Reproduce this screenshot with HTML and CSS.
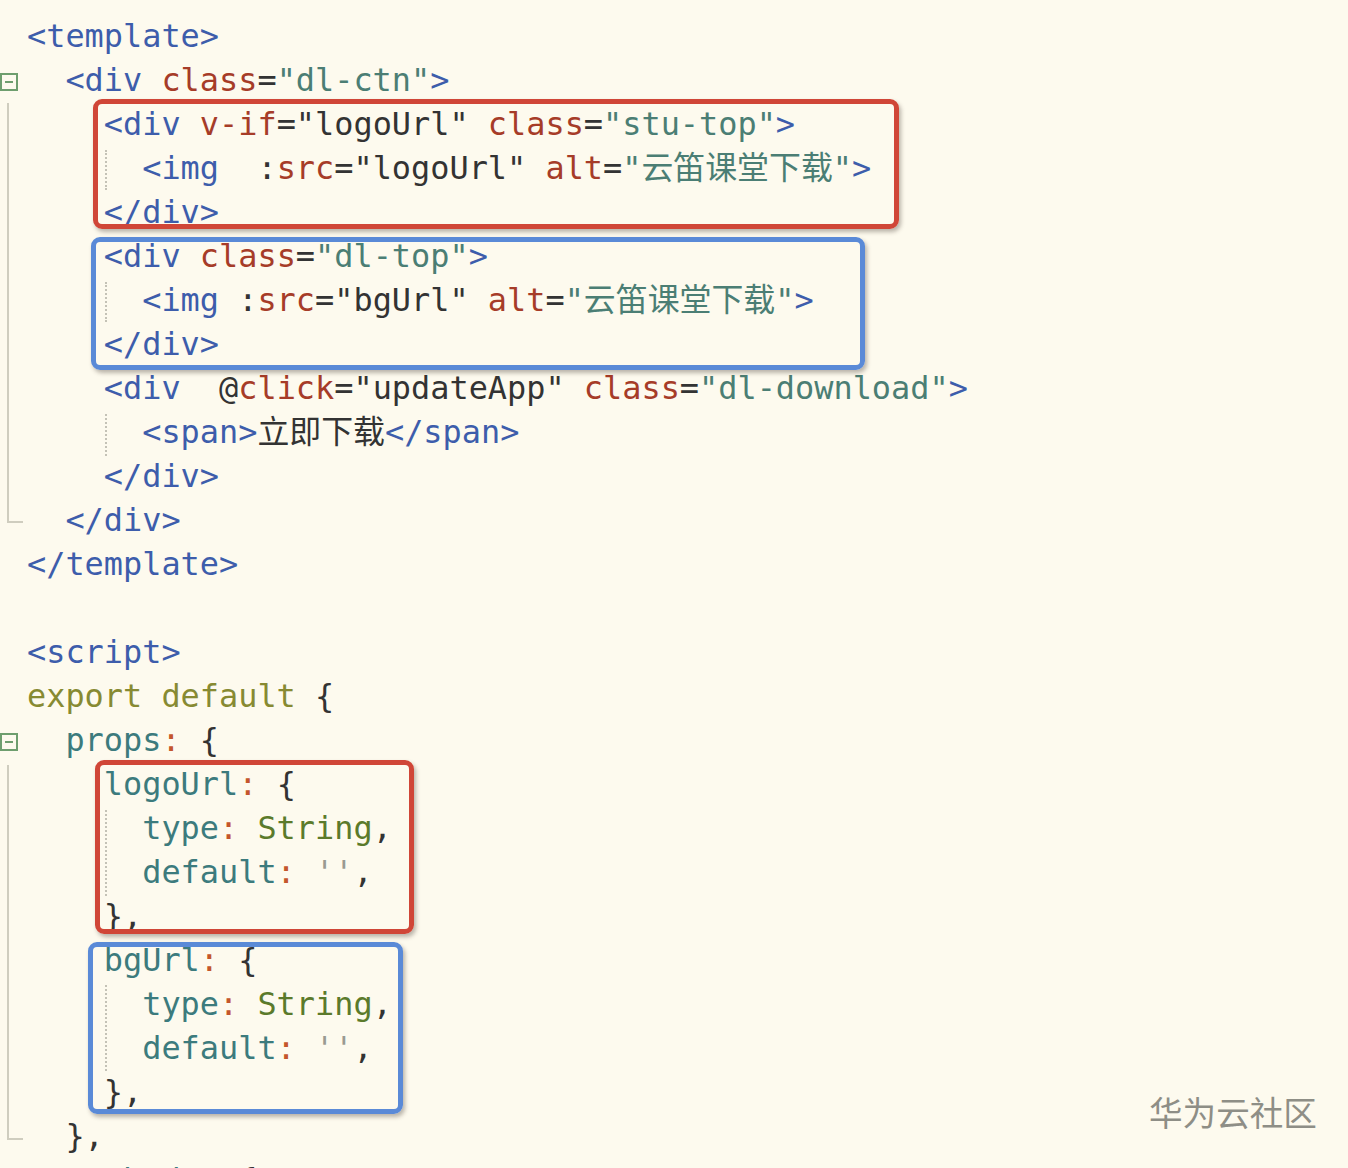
FILE: index.html
```html
<!DOCTYPE html>
<html lang="zh">
<head>
<meta charset="utf-8">
<title>code</title>
<link rel="stylesheet" href="styles.css">
</head>
<body>
<div class="editor">
  <div class="code">
<div class="ln"><span class="t">&lt;template&gt;</span></div>
<div class="ln">  <span class="t">&lt;div</span> <span class="a">class</span><span class="p">=</span><span class="v">"dl-ctn"</span><span class="t">&gt;</span></div>
<div class="ln">    <span class="t">&lt;div</span> <span class="a">v-if</span><span class="p">="logoUrl"</span> <span class="a">class</span><span class="p">=</span><span class="v">"stu-top"</span><span class="t">&gt;</span></div>
<div class="ln">      <span class="t">&lt;img</span>  <span class="p">:</span><span class="a">src</span><span class="p">="logoUrl"</span> <span class="a">alt</span><span class="p">=</span><span class="v">"云笛课堂下载"</span><span class="t">&gt;</span></div>
<div class="ln">    <span class="t">&lt;/div&gt;</span></div>
<div class="ln">    <span class="t">&lt;div</span> <span class="a">class</span><span class="p">=</span><span class="v">"dl-top"</span><span class="t">&gt;</span></div>
<div class="ln">      <span class="t">&lt;img</span> <span class="p">:</span><span class="a">src</span><span class="p">="bgUrl"</span> <span class="a">alt</span><span class="p">=</span><span class="v">"云笛课堂下载"</span><span class="t">&gt;</span></div>
<div class="ln">    <span class="t">&lt;/div&gt;</span></div>
<div class="ln">    <span class="t">&lt;div</span>  <span class="p">@</span><span class="a">click</span><span class="p">="updateApp"</span> <span class="a">class</span><span class="p">=</span><span class="v">"dl-download"</span><span class="t">&gt;</span></div>
<div class="ln">      <span class="t">&lt;span&gt;</span><span class="p">立即下载</span><span class="t">&lt;/span&gt;</span></div>
<div class="ln">    <span class="t">&lt;/div&gt;</span></div>
<div class="ln">  <span class="t">&lt;/div&gt;</span></div>
<div class="ln"><span class="t">&lt;/template&gt;</span></div>
<div class="ln"> </div>
<div class="ln"><span class="t">&lt;script&gt;</span></div>
<div class="ln"><span class="k">export</span> <span class="k">default</span> <span class="p">{</span></div>
<div class="ln">  <span class="n">props</span><span class="c">:</span> <span class="p">{</span></div>
<div class="ln">    <span class="n">logoUrl</span><span class="c">:</span> <span class="p">{</span></div>
<div class="ln">      <span class="n">type</span><span class="c">:</span> <span class="s">String</span><span class="p">,</span></div>
<div class="ln">      <span class="n">default</span><span class="c">:</span> <span class="q">''</span><span class="p">,</span></div>
<div class="ln">    <span class="p">},</span></div>
<div class="ln">    <span class="n">bgUrl</span><span class="c">:</span> <span class="p">{</span></div>
<div class="ln">      <span class="n">type</span><span class="c">:</span> <span class="s">String</span><span class="p">,</span></div>
<div class="ln">      <span class="n">default</span><span class="c">:</span> <span class="q">''</span><span class="p">,</span></div>
<div class="ln">    <span class="p">},</span></div>
<div class="ln">  <span class="p">},</span></div>
<div class="ln">  <span class="n">methods</span><span class="c">:</span> <span class="p">{</span></div>
  </div>

  <div class="fold fold-1"><span class="fold-minus"></span></div>
  <div class="fold fold-2"><span class="fold-minus"></span></div>
  <div class="foldline foldline-1"></div>
  <div class="foldline foldline-2"></div>

  <div class="guide guide-1"></div>
  <div class="guide guide-2"></div>
  <div class="guide guide-3"></div>
  <div class="guide guide-4"></div>
  <div class="guide guide-5"></div>

  <div class="box red box-1"></div>
  <div class="box blue box-2"></div>
  <div class="box red box-3"></div>
  <div class="box blue box-4"></div>

  <div class="watermark">华为云社区</div>
</div>
</body>
</html>
```

FILE: styles.css
```css
html, body {
  margin: 0;
  padding: 0;
  background: #fdfaee;
}
.editor {
  position: relative;
  width: 1348px;
  height: 1168px;
  overflow: hidden;
  background: #fdfaee;
}
.code {
  padding: 14px 0 0 27px;
  font-family: "DejaVu Sans Mono", "Noto Sans CJK SC", monospace;
  font-size: 31.9px;
  color: #333333;
}
.ln {
  height: 44px;
  line-height: 44px;
  white-space: pre;
}
.t { color: #3d5dab; }
.a { color: #a63c28; }
.v { color: #4b7e74; }
.p { color: #333333; }
.k { color: #878a32; }
.n { color: #3c7b7d; }
.c { color: #c4562c; }
.s { color: #5b7a2b; }
.q { color: #9a9a92; }

.fold {
  position: absolute;
  left: 0;
  width: 14px;
  height: 14px;
  border: 2px solid #6e9e6e;
  display: flex;
  align-items: center;
  justify-content: center;
}
.fold-1 { top: 73px; }
.fold-2 { top: 733px; }
.fold-minus {
  width: 8px;
  height: 2px;
  background: #6e9e6e;
}
.foldline {
  position: absolute;
  left: 7px;
  width: 14px;
  border-left: 2px solid #cfcdbf;
  border-bottom: 2px solid #cfcdbf;
}
.foldline-1 { top: 103px; height: 418px; }
.foldline-2 { top: 765px; height: 373px; }

.guide {
  position: absolute;
  left: 105px;
  width: 0;
  border-left: 2px dotted #c4c2b6;
}
.guide-1 { top: 150px; height: 40px; }
.guide-2 { top: 282px; height: 40px; }
.guide-3 { top: 414px; height: 42px; }
.guide-4 { top: 810px; height: 86px; }
.guide-5 { top: 985px; height: 86px; }

.box {
  position: absolute;
  border: 5px solid;
  border-radius: 9px;
  box-sizing: border-box;
  box-shadow: 2px 3px 4px rgba(60, 50, 40, 0.35);
}
.red { border-color: #d04637; }
.blue { border-color: #5a8ad7; }
.box-1 { left: 93px; top: 99px; width: 806px; height: 130px; }
.box-2 { left: 91px; top: 237px; width: 774px; height: 133px; }
.box-3 { left: 95px; top: 760px; width: 319px; height: 174px; }
.box-4 { left: 88px; top: 942px; width: 315px; height: 172px; }

.watermark {
  position: absolute;
  left: 1149px;
  top: 1090px;
  font-family: "Noto Sans CJK SC", sans-serif;
  font-size: 33.6px;
  line-height: 44px;
  color: #8e8e86;
}
```
